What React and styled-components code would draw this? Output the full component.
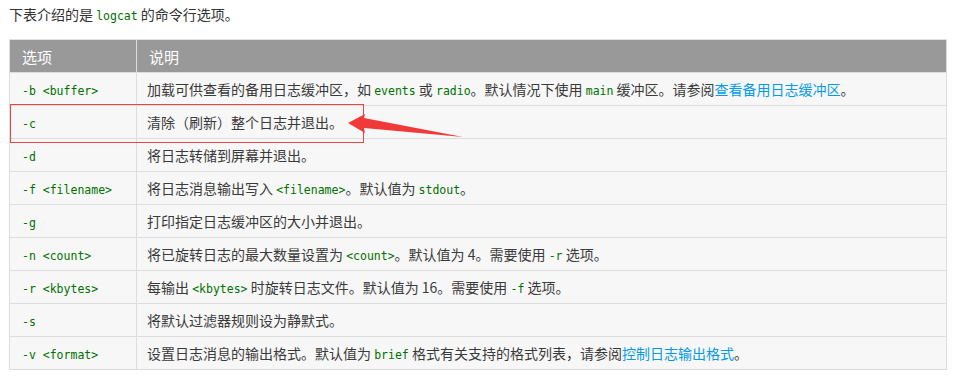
import React from 'react';
import styled, { createGlobalStyle } from 'styled-components';

const GlobalStyle = createGlobalStyle`
  body {
    margin: 0;
    background: #fff;
    font-family: "Noto Sans CJK SC", "Noto Sans", sans-serif;
    color: #333;
  }
`;

const rows = [
  {
    opt: '-b <buffer>',
    desc: ['加载可供查看的备用日志缓冲区，如 ', { code: 'events' }, ' 或 ', { code: 'radio' }, '。默认情况下使用 ', { code: 'main' }, ' 缓冲区。请参阅', { link: '查看备用日志缓冲区' }, '。'],
  },
  { opt: '-c', desc: ['清除（刷新）整个日志并退出。'] },
  { opt: '-d', desc: ['将日志转储到屏幕并退出。'] },
  { opt: '-f <filename>', desc: ['将日志消息输出写入 ', { code: '<filename>' }, '。默认值为 ', { code: 'stdout' }, '。'] },
  { opt: '-g', desc: ['打印指定日志缓冲区的大小并退出。'] },
  { opt: '-n <count>', desc: ['将已旋转日志的最大数量设置为 ', { code: '<count>' }, '。默认值为 4。需要使用 ', { code: '-r' }, ' 选项。'] },
  { opt: '-r <kbytes>', desc: ['每输出 ', { code: '<kbytes>' }, ' 时旋转日志文件。默认值为 16。需要使用 ', { code: '-f' }, ' 选项。'] },
  { opt: '-s', desc: ['将默认过滤器规则设为静默式。'] },
  { opt: '-v <format>', desc: ['设置日志消息的输出格式。默认值为 ', { code: 'brief' }, ' 格式有关支持的格式列表，请参阅', { link: '控制日志输出格式' }, '。'] },
];

function App() {
  return (
    <Page>
      <GlobalStyle />
      <Intro>下表介绍的是 <Code>logcat</Code> 的命令行选项。</Intro>
      <TableWrap>
        <Table>
          <thead>
            <tr>
              <Th $first>选项</Th>
              <Th>说明</Th>
            </tr>
          </thead>
          <tbody>
            {rows.map((r) => (
              <tr key={r.opt}>
                <Td $first><Code>{r.opt}</Code></Td>
                <Td>
                  {r.desc.map((part, i) => {
                    if (typeof part === 'string') return <span key={i}>{part}</span>;
                    if (part.code) return <Code key={i}>{part.code}</Code>;
                    return <Link key={i}>{part.link}</Link>;
                  })}
                </Td>
              </tr>
            ))}
          </tbody>
        </Table>
        <Highlight />
        {/* hand-drawn red pointer next to the -c row */}
        <Arrow viewBox="0 0 120 30" width="120" height="30">
          <path d="M2 10 L19 1 L18 5 L117 24 L18 15 L19 20 Z" fill="#f03a3a" />
        </Arrow>
      </TableWrap>
    </Page>
  );
}

const Page = styled.div`
  padding: 0 8px 0 9px;
  width: 938px;
`;

const Intro = styled.p`
  margin: 0;
  padding-top: 4px;
  height: 35px;
  font-size: 14px;
  line-height: 20px;
  color: #333;
`;

const TableWrap = styled.div`
  position: relative;
`;

const Table = styled.table`
  width: 938px;
  border-collapse: collapse;
  border: 1px solid #ddd;
  font-size: 14px;
`;

const Th = styled.th`
  background: #999;
  color: #fff;
  font-weight: normal;
  text-align: left;
  height: 32px;
  padding: 0 12px;
  border: 1px solid #ddd;
  border-top: 1px solid #e2e2e2;
  width: ${(p) => (p.$first ? '102px' : 'auto')};
  font-size: 15px;
`;

const Td = styled.td`
  background: #f7f7f7;
  height: 32px;
  padding: 0 ${(p) => (p.$first ? '12px' : '10px')};
  border: 1px solid #ddd;
  color: #3a3a3a;
  white-space: nowrap;
`;

const Code = styled.code`
  font-family: "DejaVu Sans Mono", "Liberation Mono", monospace;
  font-size: 11.5px;
  color: #007000;
`;

const Link = styled.a`
  color: #039be5;
  text-decoration: none;
`;

const Highlight = styled.div`
  position: absolute;
  left: 1px;
  top: 65px;
  width: 352px;
  height: 37px;
  border: 1px solid #e84545;
  pointer-events: none;
`;

const Arrow = styled.svg`
  position: absolute;
  left: 337px;
  top: 74px;
`;

export default App;
